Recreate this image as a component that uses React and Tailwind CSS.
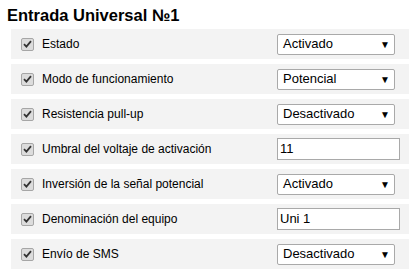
import React from 'react'

const rows = [
  { label: 'Estado', type: 'select', value: 'Activado' },
  { label: 'Modo de funcionamiento', type: 'select', value: 'Potencial' },
  { label: 'Resistencia pull-up', type: 'select', value: 'Desactivado' },
  { label: 'Umbral del voltaje de activación', type: 'input', value: '11' },
  { label: 'Inversión de la señal potencial', type: 'select', value: 'Activado' },
  { label: 'Denominación del equipo', type: 'input', value: 'Uni 1' },
  { label: 'Envío de SMS', type: 'select', value: 'Desactivado' },
]

function Check() {
  return (
    <span className="flex items-center justify-center w-[13px] h-[13px] rounded-[2px] border border-[#a6a6a6] bg-[#dcdcdc] shrink-0">
      <svg width="9" height="8" viewBox="0 0 9 8">
        <path d="M1 4.2 L3.4 6.6 L8 1.2" fill="none" stroke="#333" strokeWidth="1.8" />
      </svg>
    </span>
  )
}

function Field({ row }) {
  if (row.type === 'input') {
    return (
      <div className="w-[123px] h-[22px] border border-[#a9a9a9] bg-white flex items-center px-[2px] text-[13px] text-black">
        {row.value}
      </div>
    )
  }
  return (
    <div className="w-[118px] h-[21px] border border-[#a9a9a9] rounded-[2px] bg-white flex items-center justify-between pl-[5px] pr-[4px] text-[13px] text-black">
      <span>{row.value}</span>
      <span className="text-[10px]">▼</span>
    </div>
  )
}

export default function App() {
  return (
    <div className="w-[419px] h-[278px] bg-white overflow-hidden font-['Liberation_Sans',Arial,sans-serif]">
      <h1 className="pl-[7px] pt-[6px] h-[29px] text-[16.5px] font-bold leading-[19px] text-black">Entrada Universal №1</h1>
      <div className="flex flex-col gap-[5px] pl-[11px] pr-[10px]">
        {rows.map((row) => (
          <div key={row.label} className="h-[30px] bg-[#f3f3f3] flex items-center">
            <div className="w-[266px] flex items-center gap-[8px] pl-[10px] text-[12px] text-black">
              <Check />
              <span>{row.label}</span>
            </div>
            <Field row={row} />
          </div>
        ))}
      </div>
    </div>
  )
}
